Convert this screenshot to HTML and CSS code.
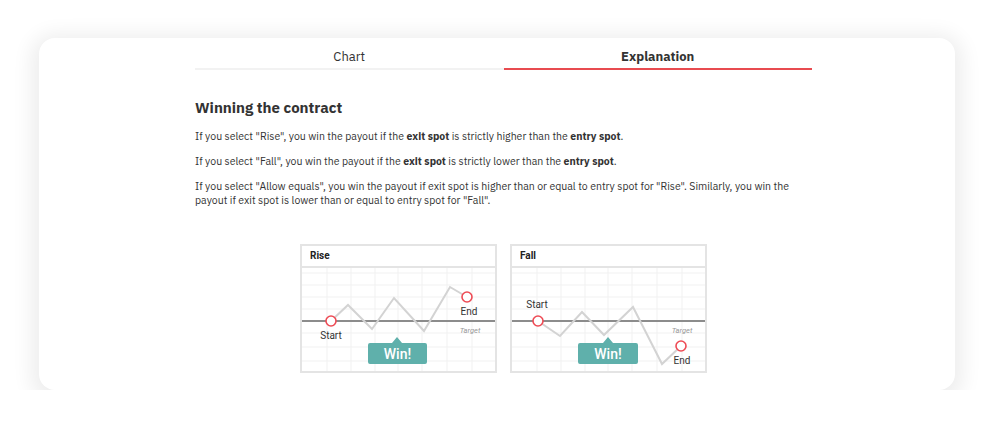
FILE: index.html
```html
<!DOCTYPE html>
<html lang="en">
<head>
    <meta charset="UTF-8">
    <meta name="viewport" content="width=device-width, initial-scale=1.0">
    <title>Contract Explanation</title>
    <link rel="stylesheet" href="styles.css">
</head>
<body>
    <div class="card">
        <div class="content">
            <div class="tabs">
                <div class="tab">Chart</div>
                <div class="tab active">Explanation</div>
            </div>

            <h2>Winning the contract</h2>
            <p>If you select "Rise", you win the payout if the <strong>exit spot</strong> is strictly higher than the <strong>entry spot</strong>.</p>
            <p>If you select "Fall", you win the payout if the <strong>exit spot</strong> is strictly lower than the <strong>entry spot</strong>.</p>
            <p>If you select "Allow equals", you win the payout if exit spot is higher than or equal to entry spot for "Rise". Similarly, you win the payout if exit spot is lower than or equal to entry spot for "Fall".</p>

            <div class="diagrams">
                <div class="diagram">
                    <div class="diagram-title">Rise</div>
                    <svg class="chart" viewBox="0 0 193 103" width="193" height="103">
                        <g class="grid">
                            <line x1="25" y1="0" x2="25" y2="103"/>
                            <line x1="49" y1="0" x2="49" y2="103"/>
                            <line x1="73" y1="0" x2="73" y2="103"/>
                            <line x1="96" y1="0" x2="96" y2="103"/>
                            <line x1="120" y1="0" x2="120" y2="103"/>
                            <line x1="145" y1="0" x2="145" y2="103"/>
                            <line x1="170" y1="0" x2="170" y2="103"/>
                            <line x1="0" y1="5" x2="193" y2="5"/>
                            <line x1="0" y1="17" x2="193" y2="17"/>
                            <line x1="0" y1="29" x2="193" y2="29"/>
                            <line x1="0" y1="41" x2="193" y2="41"/>
                            <line x1="0" y1="65" x2="193" y2="65"/>
                            <line x1="0" y1="79" x2="193" y2="79"/>
                            <line x1="0" y1="93" x2="193" y2="93"/>
                        </g>
                        <line class="target" x1="0" y1="53" x2="193" y2="53"/>
                        <polyline class="path" points="29,53 46,37 70,61 92,30 122,63 148,19 165,29"/>
                        <circle class="spot" cx="29" cy="53" r="5"/>
                        <circle class="spot" cx="165" cy="29" r="5"/>
                        <text class="label" x="29" y="71">Start</text>
                        <text class="label" x="167" y="47">End</text>
                        <text class="target-label" x="168" y="65">Target</text>
                        <path class="bubble" d="M68 75 H90 L95 69 L100 75 H123 a2 2 0 0 1 2 2 V94 a2 2 0 0 1 -2 2 H68 a2 2 0 0 1 -2 -2 V77 a2 2 0 0 1 2 -2 Z"/>
                        <text class="win" x="95.5" y="90.5">Win!</text>
                    </svg>
                </div>

                <div class="diagram">
                    <div class="diagram-title">Fall</div>
                    <svg class="chart" viewBox="0 0 193 103" width="193" height="103">
                        <g class="grid">
                            <line x1="25" y1="0" x2="25" y2="103"/>
                            <line x1="49" y1="0" x2="49" y2="103"/>
                            <line x1="73" y1="0" x2="73" y2="103"/>
                            <line x1="96" y1="0" x2="96" y2="103"/>
                            <line x1="120" y1="0" x2="120" y2="103"/>
                            <line x1="145" y1="0" x2="145" y2="103"/>
                            <line x1="170" y1="0" x2="170" y2="103"/>
                            <line x1="0" y1="5" x2="193" y2="5"/>
                            <line x1="0" y1="17" x2="193" y2="17"/>
                            <line x1="0" y1="29" x2="193" y2="29"/>
                            <line x1="0" y1="41" x2="193" y2="41"/>
                            <line x1="0" y1="65" x2="193" y2="65"/>
                            <line x1="0" y1="79" x2="193" y2="79"/>
                            <line x1="0" y1="93" x2="193" y2="93"/>
                        </g>
                        <line class="target" x1="0" y1="53" x2="193" y2="53"/>
                        <polyline class="path" points="26,53 48,68 70,44 92,67 121,39 150,96 169,78"/>
                        <circle class="spot" cx="26" cy="53" r="5"/>
                        <circle class="spot" cx="169" cy="78" r="5"/>
                        <text class="label" x="25" y="40">Start</text>
                        <text class="label" x="170" y="96">End</text>
                        <text class="target-label" x="170" y="65">Target</text>
                        <path class="bubble" d="M68 75 H91 L96 69 L101 75 H124 a2 2 0 0 1 2 2 V94 a2 2 0 0 1 -2 2 H68 a2 2 0 0 1 -2 -2 V77 a2 2 0 0 1 2 -2 Z"/>
                        <text class="win" x="96" y="90.5">Win!</text>
                    </svg>
                </div>
            </div>
        </div>
    </div>
</body>
</html>
```

FILE: styles.css
```css
body {
    font-family: "IBM Plex Sans", "Liberation Sans", Arial, sans-serif;
    margin: 0;
    padding: 0;
    background-color: #ffffff;
    color: #333;
}

.card {
    width: 916px;
    height: 347px;
    margin: 38px 0 0 39px;
    padding-top: 5px;
    background: #ffffff;
    border-radius: 16px;
    box-shadow: 0 4px 20px 8px rgba(0, 0, 0, 0.07);
}

.content {
    width: 617px;
    margin-left: 156px;
}

/* Tabs */
.tabs {
    display: grid;
    grid-template-columns: 1fr 1fr;
}

.tab {
    text-align: center;
    font-size: 13px;
    line-height: 16px;
    padding: 6px 0 3px;
    border-bottom: 2px solid #f2f2f2;
    color: #333;
}

.tab.active {
    font-weight: bold;
    border-bottom: 2px solid #e84b50;
}

h2 {
    font-size: 15px;
    line-height: 20px;
    margin: 28px 0 0;
    color: #333;
}

p {
    font-size: 10.5px;
    line-height: 14px;
    margin: 11px 0 0;
    color: #333;
}

/* Diagrams */
.diagrams {
    display: flex;
    justify-content: center;
    gap: 13px;
    margin-top: 37px;
}

.diagram {
    width: 193px;
    border: 2px solid #e4e4e4;
    background: #fff;
}

.diagram-title {
    font-family: Roboto, "Liberation Sans", sans-serif;
    font-size: 10px;
    font-weight: bold;
    line-height: 20px;
    padding-left: 8px;
    border-bottom: 2px solid #e4e4e4;
    color: #222;
}

.chart {
    display: block;
}

.grid line {
    stroke: #f1f1f1;
    stroke-width: 1;
}

.target {
    stroke: #8c8c8c;
    stroke-width: 2;
}

.path {
    fill: none;
    stroke: #d3d3d3;
    stroke-width: 2;
}

.spot {
    fill: #fff;
    stroke: #ee4b55;
    stroke-width: 1.6;
}

.label {
    font-family: Roboto, "Liberation Sans", sans-serif;
    font-size: 10px;
    fill: #333;
    text-anchor: middle;
}

.target-label {
    font-family: Roboto, "Liberation Sans", sans-serif;
    font-size: 7.5px;
    font-style: italic;
    fill: #999;
    text-anchor: middle;
}

.bubble {
    fill: #5fb0ab;
}

.win {
    font-family: Roboto, "Liberation Sans", sans-serif;
    font-size: 14px;
    font-weight: 500;
    fill: #fff;
    text-anchor: middle;
}
```
